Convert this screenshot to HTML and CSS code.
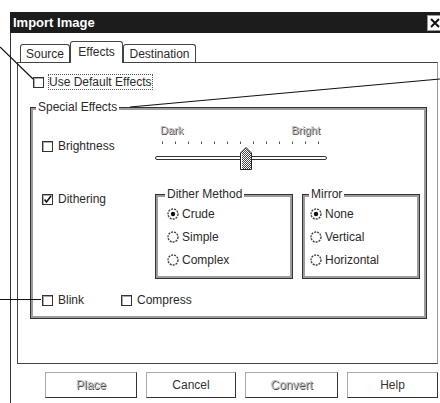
FILE: index.html
```html
<!DOCTYPE html>
<html>
<head>
<meta charset="utf-8">
<link rel="stylesheet" href="styles.css">
</head>
<body>
<div class="dialog">
  <div class="titlebar">
    <span class="title">Import Image</span>
    <span class="close"><svg width="10" height="10" viewBox="0 0 10 10"><path d="M1 1 L9 9 M9 1 L1 9" stroke="#111" stroke-width="2"/></svg></span>
  </div>
  <div class="body">
    <div class="tabs">
      <div class="tab source">Source</div>
      <div class="tab effects">Effects</div>
      <div class="tab dest">Destination</div>
    </div>
    <div class="panel">
      <div class="check usedefault"><span class="box"></span><span class="txt">Use Default Effects</span></div>
      <div class="group special">
        <div class="legend">Special Effects</div>
        <div class="row row-a">
          <div class="lcol"><div class="check"><span class="box"></span><span class="txt">Brightness</span></div></div>
          <div class="slider">
            <div class="slider-labels"><span class="emboss">Dark</span><span class="emboss">Bright</span></div>
            <svg class="slider-svg" width="172" height="34" viewBox="0 0 172 34">
              <defs>
                <pattern id="dith" width="2" height="2" patternUnits="userSpaceOnUse">
                  <rect width="2" height="2" fill="#fff"/>
                  <rect width="1" height="1" fill="#444"/>
                  <rect x="1" y="1" width="1" height="1" fill="#444"/>
                </pattern>
              </defs>
              <g fill="#555">
                <rect x="7" y="5.5" width="1" height="2.5"/>
                <rect x="20" y="5.5" width="1" height="2.5"/>
                <rect x="33" y="5.5" width="1" height="2.5"/>
                <rect x="46" y="5.5" width="1" height="2.5"/>
                <rect x="59" y="5.5" width="1" height="2.5"/>
                <rect x="72" y="5.5" width="1" height="2.5"/>
                <rect x="85" y="5.5" width="1" height="2.5"/>
                <rect x="98" y="5.5" width="1" height="2.5"/>
                <rect x="111" y="5.5" width="1" height="2.5"/>
                <rect x="124" y="5.5" width="1" height="2.5"/>
                <rect x="137" y="5.5" width="1" height="2.5"/>
                <rect x="150" y="5.5" width="1" height="2.5"/>
                <rect x="163" y="5.5" width="1" height="2.5"/>
              </g>
              <rect x="0.5" y="20.5" width="171" height="3" rx="1.5" fill="#fff" stroke="#333" stroke-width="1"/>
              <path d="M91 11.5 L96.5 17 L96.5 33.5 L85.5 33.5 L85.5 17 Z" fill="url(#dith)" stroke="#222" stroke-width="1"/>
              <path d="M86.5 17.5 L91 13 M86.5 18 L86.5 33" stroke="#fff" stroke-width="1"/>
            </svg>
          </div>
        </div>
        <div class="row row-b">
          <div class="lcol"><div class="check"><span class="box"><svg width="9" height="9" viewBox="0 0 9 9"><path d="M1.5 4.5 L3.5 7 L8 1" fill="none" stroke="#111" stroke-width="1.6"/></svg></span><span class="txt">Dithering</span></div></div>
          <div class="group dither">
            <div class="legend">Dither Method</div>
            <div class="radios">
              <div class="radio"><svg width="12" height="12" viewBox="0 0 12 12"><circle cx="6" cy="6" r="5" fill="#fff" stroke="#444" stroke-width="1.4" stroke-dasharray="2 1"/><circle cx="6" cy="6" r="2.2" fill="#111"/></svg><span>Crude</span></div>
              <div class="radio"><svg width="12" height="12" viewBox="0 0 12 12"><circle cx="6" cy="6" r="5" fill="#fff" stroke="#444" stroke-width="1.4" stroke-dasharray="2 1"/></svg><span>Simple</span></div>
              <div class="radio"><svg width="12" height="12" viewBox="0 0 12 12"><circle cx="6" cy="6" r="5" fill="#fff" stroke="#444" stroke-width="1.4" stroke-dasharray="2 1"/></svg><span>Complex</span></div>
            </div>
          </div>
          <div class="group mirror">
            <div class="legend">Mirror</div>
            <div class="radios">
              <div class="radio"><svg width="12" height="12" viewBox="0 0 12 12"><circle cx="6" cy="6" r="5" fill="#fff" stroke="#444" stroke-width="1.4" stroke-dasharray="2 1"/><circle cx="6" cy="6" r="2.2" fill="#111"/></svg><span>None</span></div>
              <div class="radio"><svg width="12" height="12" viewBox="0 0 12 12"><circle cx="6" cy="6" r="5" fill="#fff" stroke="#444" stroke-width="1.4" stroke-dasharray="2 1"/></svg><span>Vertical</span></div>
              <div class="radio"><svg width="12" height="12" viewBox="0 0 12 12"><circle cx="6" cy="6" r="5" fill="#fff" stroke="#444" stroke-width="1.4" stroke-dasharray="2 1"/></svg><span>Horizontal</span></div>
            </div>
          </div>
        </div>
        <div class="row row-c">
          <div class="check blink"><span class="box"></span><span class="txt">Blink</span></div>
          <div class="check"><span class="box"></span><span class="txt">Compress</span></div>
        </div>
      </div>
    </div>
    <div class="buttons">
      <div class="btn w92"><span class="emboss">Place</span></div>
      <div class="btn w90">Cancel</div>
      <div class="btn w93"><span class="emboss">Convert</span></div>
      <div class="btn w91">Help</div>
    </div>
  </div>
</div>
<svg class="annotations" width="440" height="403" viewBox="0 0 440 403">
  <g stroke="#111" stroke-width="1.2" fill="none">
    <line x1="0" y1="47" x2="33" y2="79"/>
    <line x1="130" y1="107" x2="440" y2="79"/>
    <line x1="0" y1="299.5" x2="41" y2="299.5"/>
  </g>
</svg>
</body>
</html>
```

FILE: styles.css
```css
* { box-sizing: border-box; }
html, body { margin: 0; padding: 0; }
body {
  width: 440px;
  height: 403px;
  overflow: hidden;
  background: #fff;
  font-family: "Liberation Sans", Arial, sans-serif;
  font-size: 12px;
  color: #2a2a2a;
  position: relative;
}
.dialog {
  margin: 12px 0 0 10px;
  width: 440px;
}
.titlebar {
  height: 21px;
  background: #1c1c1c;
  display: flex;
  align-items: center;
  justify-content: space-between;
  padding: 0 7px 0 3px;
}
.title {
  color: #fff;
  font-weight: bold;
  font-size: 13px;
}
.close {
  width: 16px;
  height: 16px;
  background: #fff;
  border: 1px solid #999;
  display: flex;
  align-items: center;
  justify-content: center;
}
.body {
  border-left: 1px solid #333;
  padding-left: 6px;
  height: 370px;
}
.tabs {
  display: flex;
  align-items: flex-end;
  height: 29px;
  padding-left: 3px;
}
.tab {
  height: 18px;
  border: 1px solid #444;
  border-bottom: none;
  border-radius: 3px 3px 0 0;
  display: flex;
  align-items: center;
  justify-content: center;
  background: #fff;
}
.tab.source { width: 50px; }
.tab.effects {
  width: 53px;
  height: 22px;
  margin-bottom: -1px;
  padding-bottom: 2px;
  position: relative;
  z-index: 1;
}
.tab.dest { width: 73px; }
.panel {
  width: 421px;
  height: 302px;
  border: 1px solid #444;
  border-right-color: #999;
  padding: 11px 0 0 12px;
}
.check {
  display: flex;
  align-items: center;
  height: 14px;
}
.box {
  width: 11px;
  height: 11px;
  border: 1px solid #333;
  box-shadow: inset 1px 1px 0 #aaa;
  flex: none;
  display: flex;
  align-items: center;
  justify-content: center;
}
.check .txt { margin-left: 5px; }
.usedefault {
  margin-left: 3px;
  height: 16px;
}
.usedefault .txt {
  margin-left: 4px;
  border: 1px dotted #555;
  height: 16px;
  line-height: 14px;
}
.group {
  border: 1px solid #333;
  box-shadow: inset 0 0 0 2px #9c9c9c;
}
.legend {
  background: #fff;
  width: max-content;
  margin-top: -8px;
  padding: 0 2px;
  line-height: 14px;
  position: relative;
}
.special {
  width: 397px;
  margin-top: 17px;
  padding: 0 0 11px 0;
}
.special > .legend { margin-left: 5px; }
.row {
  display: flex;
  padding-left: 11px;
}
.lcol { width: 113px; flex: none; }
.row-a { margin-top: 10px; }
.row-a .lcol .check { margin-top: 15px; }
.slider { width: 172px; }
.slider-labels {
  display: flex;
  justify-content: space-between;
  padding: 0 7px 0 5px;
  font-size: 11px;
  line-height: 12px;
}
.slider-svg { display: block; }
.emboss {
  color: #bdbdbd;
  text-shadow: 1px 1px 0 #4a4a4a;
}
.row-b { margin-top: 20px; }
.row-b .lcol .check { margin-top: 2px; }
.dither {
  width: 138px;
  margin-top: 4px;
  padding-bottom: 7px;
}
.dither > .legend { margin-left: 9px; }
.dither .radios { padding: 1px 0 0 11px; }
.mirror {
  width: 118px;
  margin-left: 9px;
  margin-top: 4px;
  padding-bottom: 7px;
}
.mirror > .legend { margin-left: 6px; }
.mirror .radios { padding: 1px 0 0 7px; }
.radio {
  display: flex;
  align-items: center;
  height: 23px;
}
.radio svg { margin-right: 3px; flex: none; }
.row-c { margin-top: 14px; }
.row-c .blink { width: 79px; }
.buttons {
  display: flex;
  gap: 9px;
  margin-top: 8px;
  padding-left: 28px;
}
.btn {
  height: 26px;
  border: 1px solid;
  border-color: #aaa #333 #333 #aaa;
  display: flex;
  align-items: center;
  justify-content: center;
  color: #333;
}
.w92 { width: 92px; }
.w90 { width: 90px; }
.w93 { width: 93px; }
.w91 { width: 91px; }
.annotations {
  position: absolute;
  top: 0;
  left: 0;
  pointer-events: none;
}
```
